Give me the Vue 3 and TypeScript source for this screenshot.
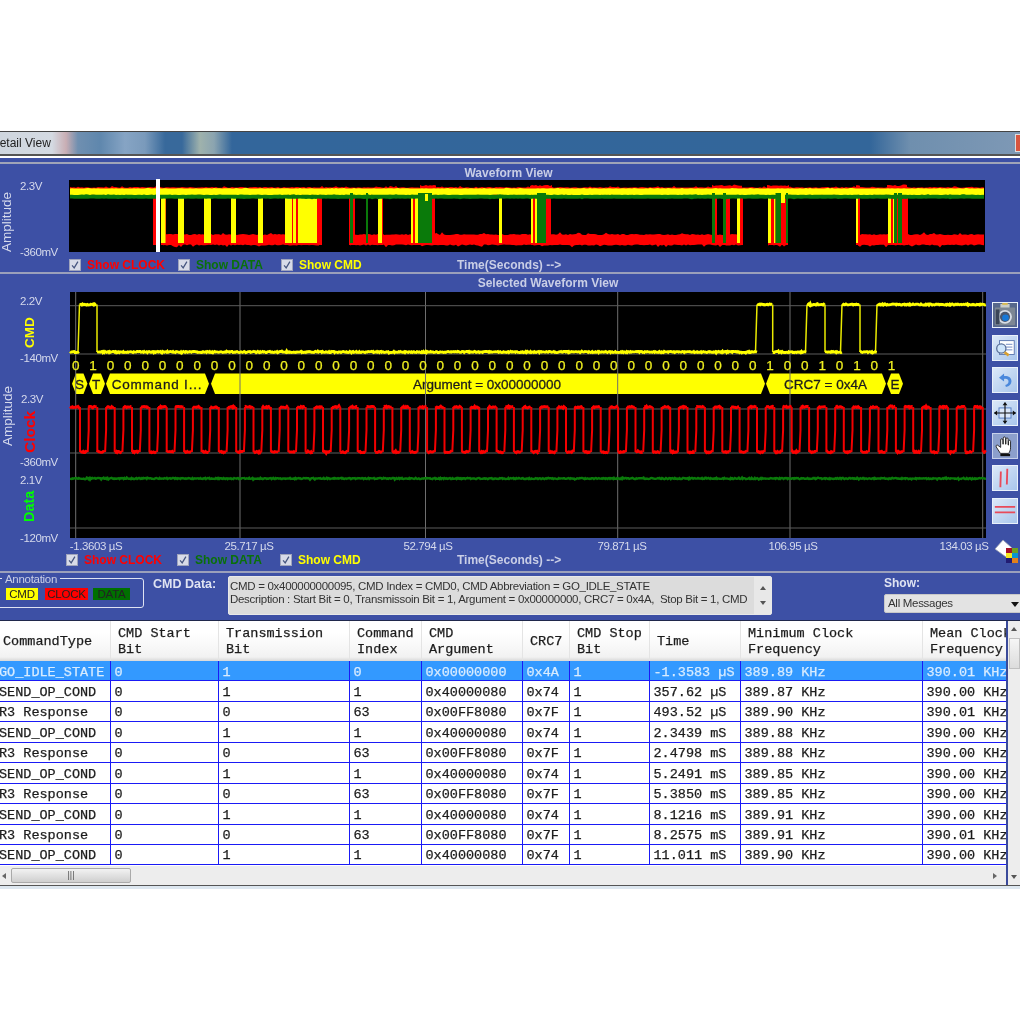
<script setup lang="ts">
function makeRng(seed: number) {
  let s = seed >>> 0
  return () => {
    s = (s + 0x6d2b79f5) >>> 0
    let t = s
    t = Math.imul(t ^ (t >>> 15), t | 1)
    t ^= t + Math.imul(t ^ (t >>> 7), t | 61)
    return ((t ^ (t >>> 14)) >>> 0) / 4294967296
  }
}
const rng = makeRng(42)
const n = (a: number) => (rng() * 2 - 1) * a
const f = (v: number) => v.toFixed(1)

/* ---------- overview plot ---------- */
function band(x0: number, x1: number, top: number, bottom: number, a: number, spike = 0): string {
  const up: string[] = []
  const down: string[] = []
  for (let x = x0; x <= x1; x += 2) {
    const spikeT = rng() < 0.07 ? spike : 0
    const spikeB = rng() < 0.07 ? spike : 0
    up.push(`${f(x)},${f(top + n(a) - spikeT)}`)
    down.unshift(`${f(x)},${f(bottom + n(a) + spikeB)}`)
  }
  return 'M' + up.concat(down).join('L') + 'Z'
}
const ovBottom = [
  [163, 320],
  [350, 743],
  [768, 788],
  [858, 985]
]
  .map(([a, b]) => band(a, b, 234.5, 245, 0.6, 1.8))
  .join('')
const ovRedTop = band(70, 985, 187.4, 194, 0.4, 1)
const ovRedBurst = [
  [420, 436],
  [530, 552],
  [712, 742],
  [767, 790],
  [856, 860],
  [887, 908]
]
  .map(([a, b]) => band(a, b, 185.5, 194, 0.6, 1.2))
  .join('')
const ovYellow = band(70, 985, 188.4, 195, 0.2, 0.5)
const ovGreen = band(70, 985, 194.8, 198.7, 0.15, 0.4)
const bar = (x0: number, x1: number, y0: number, y1: number) => ({ x: x0, w: x1 - x0, y: y0, h: y1 - y0 })
const ovRedBars = [
  [153, 156], [161, 166], [285, 322], [349, 355], [378, 383], [411, 420], [425, 435], [531, 551],
  [712, 717], [723, 730], [737, 743], [768, 788], [856, 860], [888, 908]
].map(([a, b]) => bar(a, b, 198, 245))
const ovYellowBars = [
  [161, 165.5], [178, 184], [204, 211], [231, 236], [258, 263], [285, 292], [293, 296], [298, 317],
  [378, 382], [411, 413], [415, 418], [499, 502], [531, 533], [535, 537], [737, 740], [768, 771],
  [774, 775.5], [856, 858], [888, 891], [893, 894.5]
].map(([a, b]) => bar(a, b, 198, 243))
const ovGreenBars = [
  [350, 353], [366, 368], [418, 432], [537, 546], [712, 715], [723, 726], [775.5, 781], [786, 788],
  [894, 897], [898, 902]
].map(([a, b]) => bar(a, b, 193, 243))

/* ---------- selected waveform plot ---------- */
function plateau(x0: number, x1: number, y: number, a: number): string {
  const pts: string[] = []
  for (let x = x0; x <= x1; x += 0.8) {
    pts.push(`${f(x)},${f(y + n(rng() < 0.06 ? a * 1.8 : a))}`)
  }
  return 'M' + pts.join('L')
}
const cmdHigh = [
  [79.5, 97],
  [757, 772.7],
  [807, 825],
  [842, 860],
  [877, 986]
]
const HI = 304.5
const LO = 352
let cmdFlat = ''
let cmdEdge = ''
{
  let cur = 70
  for (const [a, b] of cmdHigh) {
    cmdFlat += plateau(cur, a, LO, 0.6) + plateau(a, b, HI, 0.6)
    cmdEdge += `M${a - 1.5},${LO}L${a},${HI}`
    if (b < 986) cmdEdge += `M${b},${HI}L${b},${LO}`
    cur = b
  }
}
let clockFlat = ''
let clockEdge = ''
{
  const period = 17.36
  clockFlat += plateau(70, 80, 407, 0.7)
  clockEdge += 'M80,407L80,452'
  clockFlat += plateau(80, 87.7, 452, 0.7)
  for (let x = 87.7; x < 986; x += period) {
    const fall = Math.min(x + 9.6, 986)
    const rise = Math.min(x + period, 986)
    clockEdge += `M${f(x)},452L${f(x + 1)},430L${f(x + 1)},407`
    clockFlat += plateau(x + 1, fall, 407, 0.7)
    if (fall < 986) {
      clockEdge += `M${f(fall)},407L${f(fall)},452`
      clockFlat += plateau(fall, rise, 452, 0.7)
    }
  }
}
const dataPath = plateau(70, 986, 478.5, 0.6)

const bitString = '01' + '0'.repeat(38) + '10010101'
const bits = bitString.split('').map((b, i) => ({ b, x: 75.7 + i * 17.36 }))
const vGrid = [75.7, 240, 425.5, 617.7, 790, 982.7]
const hGrid = [305.7, 354, 409, 453, 528]

function hex(x0: number, x1: number): string {
  const t = 373.5
  const b = 394
  const m = (t + b) / 2
  return `${x0},${m} ${x0 + 4},${t} ${x1 - 4},${t} ${x1},${m} ${x1 - 4},${b} ${x0 + 4},${b}`
}
const annotations = [
  { pts: hex(72, 87.5), label: 'S', x: 79.5, wide: false },
  { pts: hex(89, 105), label: 'T', x: 96, wide: false },
  { pts: hex(106, 209), label: 'Command I...', x: 157, wide: true },
  { pts: hex(211, 765), label: 'Argument = 0x00000000', x: 487, wide: false },
  { pts: hex(766, 886), label: 'CRC7 = 0x4A', x: 825.5, wide: false },
  { pts: hex(887, 903), label: 'E', x: 895, wide: false }
]
const axisLabels = [
  { t: '-1.3603 µS', x: 96 },
  { t: '25.717 µS', x: 249 },
  { t: '52.794 µS', x: 428 },
  { t: '79.871 µS', x: 622 },
  { t: '106.95 µS', x: 793 },
  { t: '134.03 µS', x: 964 }
]
const sideValues = [
  { t: '2.2V', x: 20, y: 305 },
  { t: '-140mV', x: 20, y: 362 },
  { t: '2.3V', x: 21, y: 403 },
  { t: '-360mV', x: 20, y: 466 },
  { t: '2.1V', x: 20, y: 484 },
  { t: '-120mV', x: 20, y: 542 }
]
const checks = [
  { label: 'Show CLOCK', cls: 'c-red' },
  { label: 'Show DATA', cls: 'c-green' },
  { label: 'Show CMD', cls: 'c-yellow' }
]

/* ---------- table ---------- */
const headers = [
  'CommandType',
  'CMD Start\nBit',
  'Transmission\nBit',
  'Command\nIndex',
  'CMD\nArgument',
  'CRC7',
  'CMD Stop\nBit',
  'Time',
  'Minimum Clock\nFrequency',
  'Mean Clock\nFrequency'
]
const send = ['SEND_OP_COND', '0', '1', '1', '0x40000080', '0x74', '1']
const r3 = ['R3 Response', '0', '0', '63', '0x00FF8080', '0x7F', '1']
const rows: string[][] = [
  ['GO_IDLE_STATE', '0', '1', '0', '0x00000000', '0x4A', '1', '-1.3583 µS', '389.89 KHz', '390.01 KHz'],
  [...send, '357.62 µS', '389.87 KHz', '390.00 KHz'],
  [...r3, '493.52 µS', '389.90 KHz', '390.01 KHz'],
  [...send, '2.3439 mS', '389.88 KHz', '390.00 KHz'],
  [...r3, '2.4798 mS', '389.88 KHz', '390.00 KHz'],
  [...send, '5.2491 mS', '389.85 KHz', '390.00 KHz'],
  [...r3, '5.3850 mS', '389.85 KHz', '390.00 KHz'],
  [...send, '8.1216 mS', '389.91 KHz', '390.00 KHz'],
  [...r3, '8.2575 mS', '389.91 KHz', '390.01 KHz'],
  [...send, '11.011 mS', '389.90 KHz', '390.00 KHz']
]
const desc1 = 'CMD = 0x400000000095, CMD Index = CMD0, CMD Abbreviation = GO_IDLE_STATE'
const desc2 = 'Description : Start Bit = 0, Transmissoin Bit = 1, Argument = 0x00000000, CRC7 = 0x4A,  Stop Bit = 1, CMD'
</script>

<template>
  <div class="root">
    <div class="titlebar">
      <span class="title-text">Detail View</span>
      <span class="close"></span>
    </div>
    <div class="panel">
      <div class="title first">Waveform View</div>
      <svg class="overview" viewBox="0 180 1020 78" width="1020" height="78">
        <text class="axis big" transform="translate(11 252) rotate(-90)">Amplitude</text>
        <text class="axis" x="20" y="190">2.3V</text>
        <text class="axis" x="20" y="256">-360mV</text>
        <rect x="69" y="180" width="916" height="72" fill="#000" />
        <path :d="ovBottom" fill="#f00" />
        <path :d="ovRedTop" fill="#f00" />
        <path :d="ovRedBurst" fill="#f00" />
        <rect v-for="(b, i) in ovRedBars" :key="'r' + i" :x="b.x" :y="b.y" :width="b.w" :height="b.h" fill="#f00" />
        <rect v-for="(b, i) in ovYellowBars" :key="'y' + i" :x="b.x" :y="b.y" :width="b.w" :height="b.h" fill="#ff0" />
        <path :d="ovYellow" fill="#ff0" />
        <path :d="ovGreen" fill="#0a7a0a" />
        <rect v-for="(b, i) in ovGreenBars" :key="'g' + i" :x="b.x" :y="b.y" :width="b.w" :height="b.h" fill="#0a7a0a" />
        <rect x="425" y="194" width="3" height="7" fill="#ff0" />
        <rect x="781" y="194" width="4" height="9" fill="#ff0" />
        <rect x="156" y="179" width="4" height="73" fill="#fff" />
      </svg>
      <div class="checkrow">
        <label v-for="c in checks" :key="c.label" class="check" :class="c.cls">
          <span class="box"><svg viewBox="0 0 12 12" width="10" height="10"><path d="M2.5 6.5 5 9.5 9.5 2" fill="none" stroke="#46557f" stroke-width="1.5" /></svg></span>
          {{ c.label }}
        </label>
        <span class="time-label">Time(Seconds) --&gt;</span>
      </div>
      <div class="divider"></div>
      <div class="title second">Selected Waveform View</div>
      <div class="plot-row">
        <svg class="detail" viewBox="0 292 986 260" width="986" height="260">
          <text class="axis big" transform="translate(12 446) rotate(-90)">Amplitude</text>
          <text v-for="v in sideValues" :key="v.t + v.y" class="axis" :x="v.x" :y="v.y">{{ v.t }}</text>
          <text class="side s-cmd" fill="#ff0" transform="translate(34 348) rotate(-90)">CMD</text>
          <text class="side s-clock" fill="#f00" transform="translate(35 453) rotate(-90)">Clock</text>
          <text class="side s-data" fill="#0f0" transform="translate(34 522) rotate(-90)">Data</text>
          <rect x="70" y="292" width="916" height="246" fill="#000" />
          <g v-for="a in annotations" :key="a.label">
            <polygon :points="a.pts" fill="#ff0" />
            <text class="anno" :class="{ wide: a.wide }" :x="a.x" y="389" text-anchor="middle">{{ a.label }}</text>
          </g>
          <line v-for="x in vGrid" :key="'v' + x" :x1="x" :x2="x" y1="292" y2="538" stroke="#6e6e6e" stroke-width="1" />
          <line v-for="y in hGrid" :key="'h' + y" x1="70" x2="986" :y1="y" :y2="y" stroke="#5c5c5c" stroke-width="1" />
          <path :d="cmdEdge" fill="none" stroke="#eaea00" stroke-width="1.5" />
          <path :d="cmdFlat" fill="none" stroke="#ff0" stroke-width="2.8" />
          <path :d="clockEdge" fill="none" stroke="#f20000" stroke-width="2" />
          <path :d="clockFlat" fill="none" stroke="#f00" stroke-width="2.8" />
          <path :d="dataPath" fill="none" stroke="#0a7a0a" stroke-width="2.4" />
          <text v-for="(b, i) in bits" :key="'b' + i" class="bit" :x="b.x" y="370" text-anchor="middle">{{ b.b }}</text>
          <text v-for="l in axisLabels" :key="l.t" class="axis" :x="l.x" y="550" text-anchor="middle">{{ l.t }}</text>
        </svg>
        <div class="toolbar">
          <button class="tool dark" type="button" aria-label="Snapshot">
            <svg viewBox="0 0 26 26" width="24" height="24">
              <rect width="26" height="26" fill="#57688c" />
              <rect x="8" y="1" width="10" height="5" fill="#c9cdc8" />
              <rect x="10" y="0" width="6" height="2" fill="#d8b850" />
              <rect x="2" y="5" width="22" height="19" rx="1" fill="#7d8794" />
              <circle cx="13" cy="15" r="7.5" fill="#d7dde6" />
              <circle cx="13" cy="15" r="5.5" fill="#4a5870" />
              <circle cx="13.5" cy="16" r="3.6" fill="#1678d8" />
              <rect x="3" y="7" width="4" height="16" fill="#3a4558" />
            </svg>
          </button>
          <button class="tool" type="button" aria-label="Find">
            <svg viewBox="0 0 26 26" width="24" height="24">
              <rect x="7" y="5" width="16" height="15" fill="#fff" stroke="#5b77b0" />
              <path d="M14 9h7M14 12h7M14 15h7" stroke="#6a86c0" />
              <circle cx="9" cy="13.500" r="5" fill="#cfe6fb" stroke="#5a6f98" stroke-width="1.4" />
              <path d="M12.500 17.500l4.500 3.500" stroke="#d8a030" stroke-width="2.800" />
            </svg>
          </button>
          <button class="tool" type="button" aria-label="Undo">
            <svg viewBox="0 0 26 26" width="24" height="24">
              <path d="M12 6 6.500 10.500l5.500 4v-2.700c3-.5 4.800.5 4.800 2.700 0 1.900-1.300 3.200-3.500 3.800l.7 2.200c3.800-.6 6-3 6-6.200 0-3.800-3.200-5.900-8-5.600z" fill="#4a88dc" />
            </svg>
          </button>
          <button class="tool" type="button" aria-label="Pan">
            <svg viewBox="0 0 26 26" width="24" height="24">
              <rect x="6.500" y="7.500" width="13" height="11" fill="#dbe8fa" stroke="#4f78c0" />
              <path d="M13 2v22M1.500 13h23" stroke="#111" stroke-width="1.200" />
              <path d="M13 1l-2.600 3.500h5.200zM13 25l-2.600-3.500h5.200zM1 13l3.500-2.600v5.200zM25 13l-3.500-2.600v5.200z" fill="#111" />
            </svg>
          </button>
          <button class="tool pressed" type="button" aria-label="Hand">
            <svg viewBox="0 0 26 26" width="24" height="24">
              <path d="M8 21 3.500 14c-.8-1.800 1-2.600 2-1.500l2.800 2V6.500c0-1.800 2.300-1.800 2.400 0V11h.4V4.500c0-1.800 2.400-1.800 2.500 0V11h.4V5.500c0-1.700 2.400-1.700 2.400 0V12h.4V8c0-1.600 2.200-1.600 2.200 0v7c0 2.500-1 4.500-2 6z" fill="#fff" stroke="#222" stroke-width="1" />
              <rect x="8" y="21.500" width="10.500" height="2.500" fill="#111" />
            </svg>
          </button>
          <button class="tool" type="button" aria-label="Vertical cursors">
            <svg viewBox="0 0 26 26" width="24" height="24"><path d="M8.500 6 8 23M15.500 3 15 20" stroke="#e84a5a" stroke-width="2" /></svg>
          </button>
          <button class="tool" type="button" aria-label="Horizontal cursors">
            <svg viewBox="0 0 26 26" width="24" height="24"><path d="M2 8.500h22M2 14.500h22" stroke="#e84a5a" stroke-width="2" /></svg>
          </button>
          <svg class="paint" viewBox="0 0 26 26" width="26" height="26">
            <path d="M1 11 9 2l9 8-6 9z" fill="#fff" stroke="#9aa0b0" stroke-width=".8" />
            <rect x="12" y="10" width="6" height="5" fill="#a81028" />
            <rect x="18" y="10" width="6" height="5" fill="#6ea024" />
            <rect x="12" y="15" width="6" height="5" fill="#f4e820" />
            <rect x="18" y="15" width="6" height="5" fill="#0a94d4" />
            <rect x="12" y="20" width="6" height="5" fill="#221c72" />
            <rect x="18" y="20" width="6" height="5" fill="#e2801a" />
          </svg>
        </div>
      </div>
      <div class="checkrow low">
        <label v-for="c in checks" :key="c.label" class="check" :class="c.cls">
          <span class="box"><svg viewBox="0 0 12 12" width="10" height="10"><path d="M2.5 6.5 5 9.5 9.5 2" fill="none" stroke="#46557f" stroke-width="1.5" /></svg></span>
          {{ c.label }}
        </label>
        <span class="time-label">Time(Seconds) --&gt;</span>
      </div>
      <div class="divider low-div"></div>
      <div class="lower">
        <div class="annotation">
          <span class="legend">Annotation</span>
          <span class="chip chip-y">CMD</span>
          <span class="chip chip-r">CLOCK</span>
          <span class="chip chip-g">DATA</span>
        </div>
        <div class="cmd-label">CMD Data:</div>
        <div class="cmd-box">
          <div class="cmd-text">
            <div>{{ desc1 }}</div>
            <div>{{ desc2 }}</div>
          </div>
          <div class="cmd-scroll">
            <span class="tri up"></span>
            <span class="tri down"></span>
          </div>
        </div>
        <div class="show">
          <div class="show-label">Show:</div>
          <div class="select">All Messages<span class="tri down black"></span></div>
        </div>
      </div>
    </div>
    <div class="gridwrap">
      <div class="grid-main">
        <div class="grid-clip">
          <div class="grid">
            <div class="row head">
              <div v-for="h in headers" :key="h" class="hcell">{{ h }}</div>
            </div>
            <div v-for="(r, i) in rows" :key="i" class="row body" :class="{ selected: i === 0 }">
              <div v-for="(v, j) in r" :key="j" class="cell">{{ v }}</div>
            </div>
          </div>
        </div>
        <div class="hscroll">
          <span class="tri left"></span>
          <span class="thumb">|||</span>
          <span class="tri right"></span>
        </div>
      </div>
      <div class="vscroll">
        <span class="tri up"></span>
        <span class="vthumb"></span>
        <span class="tri down"></span>
      </div>
    </div>
    <div class="footer"></div>
  </div>
</template>

<style scoped>
.root {
  width: 1020px;
  height: 1020px;
  padding-top: 131px;
  box-sizing: border-box;
  background: #fff;
  overflow: hidden;
  font-family: "Liberation Sans", Arial, sans-serif;
  filter: blur(0.45px);
}
.titlebar {
  height: 25px;
  box-sizing: border-box;
  border-top: 1px solid #444;
  border-bottom: 2px solid #555;
  display: flex;
  align-items: center;
  justify-content: space-between;
  overflow: hidden;
  background: linear-gradient(to right, #cfd6de 0, #d4dae2 52px, #c9aeb4 66px, #6f8fb0 78px, #5f87ad 100px, #86a4c4 125px, #7a9abb 145px, #38699b 165px, #38699b 182px, #9fb2ac 200px, #8ba4b0 214px, #33669b 232px, #33669a 850px, #33669a 870px, #6f8fae 910px, #7d98b5 1014px);
}
.title-text {
  margin-left: -9px;
  font-size: 12px;
  color: #222;
}
.close {
  width: 4px;
  height: 16px;
  border: 1px solid #ddd;
  border-right: 0;
  background: #d8553f;
}
.panel {
  height: 463px;
  box-sizing: border-box;
  margin-top: 1px;
  background: #3d50a5;
  border-top: 1px solid #fff;
}
.title {
  font-size: 12px;
  font-weight: 700;
  color: #c9cee6;
  text-align: center;
}
.title.first {
  height: 14px;
  padding-top: 8px;
  line-height: 14px;
  background: linear-gradient(#3d50a5 0 4px, #a0a4b8 4px 5.500px, #3d50a5 5.500px);
  padding-right: 3px;
}
.title.second {
  height: 18.500px;
  line-height: 19px;
  padding-left: 76px;
}
svg {
  display: block;
}
.overview,
.detail {
  overflow: visible;
}
.axis {
  font-size: 11.500px;
  letter-spacing: -0.4px;
  fill: #d6daec;
}
.axis.big {
  font-size: 13.500px;
  letter-spacing: 0;
}
.side {
  font-weight: 700;
}
.s-cmd { font-size: 13.500px; }
.s-clock { font-size: 15.500px; }
.s-data { font-size: 14.500px; }
.anno {
  font-size: 13.500px;
  font-weight: 400;
  fill: #1c1c1c;
  stroke: #1c1c1c;
  stroke-width: 0.3px;
}
.anno.wide {
  letter-spacing: 0.8px;
}
.bit {
  font-size: 13.500px;
  font-weight: 400;
  fill: #f0f020;
  stroke: #f0f020;
  stroke-width: 0.25px;
}
.checkrow {
  height: 13px;
  display: grid;
  grid-template-columns: 109px 103px 176px auto;
  padding-left: 69px;
  align-items: center;
}
.checkrow.low {
  height: 16px;
  grid-template-columns: 111px 103px 177px auto;
  padding-left: 66px;
}
.check {
  display: flex;
  align-items: center;
  gap: 6px;
  font-size: 12px;
  font-weight: 700;
}
.box {
  width: 12px;
  height: 12px;
  box-sizing: border-box;
  border: 1px solid #9fa4bc;
  background: #d8dbe8;
  display: flex;
  align-items: center;
  justify-content: center;
}
.c-red { color: #f00; }
.c-green { color: #0a700a; }
.c-yellow { color: #ff0; }
.time-label {
  font-size: 12px;
  font-weight: 700;
  color: #c9cee6;
}
.divider {
  height: 1.500px;
  background: #9ba0bb;
  margin-top: 1px;
}
.low-div {
  margin-top: 3px;
}
.plot-row {
  display: flex;
  height: 260px;
}
.detail {
  flex: none;
}
.toolbar {
  display: flex;
  flex-direction: column;
  gap: 6.700px;
  padding: 10px 0 0 6px;
}
.tool {
  width: 26px;
  height: 26px;
  flex: none;
  padding: 0;
  box-sizing: border-box;
  border: 1.500px solid #eaf1fb;
  background: linear-gradient(135deg, #dbe8f8, #a9c6ec);
  display: flex;
  align-items: center;
  justify-content: center;
  overflow: hidden;
}
.tool.dark {
  background: #57688c;
}
.tool.pressed {
  background: #8c9fcc;
  border-color: #c6d0ea;
}
.paint {
  flex: none;
  margin-top: 7px;
  margin-left: 2px;
}
.lower {
  display: flex;
  align-items: flex-start;
  height: 47px;
}
.annotation {
  position: relative;
  flex: none;
  width: 147px;
  height: 30px;
  box-sizing: border-box;
  margin: 5.500px 0 0 -3px;
  border: 1px solid #dfe3f2;
  border-radius: 3px;
  display: flex;
  padding: 9px 0 0 8px;
}
.legend {
  position: absolute;
  left: 4px;
  top: -6px;
  padding: 0 3px;
  background: #3d50a5;
  font-size: 11.500px;
  letter-spacing: -0.3px;
  line-height: 13px;
  color: #c9cee6;
}
.chip {
  height: 12px;
  line-height: 12px;
  font-size: 11.500px;
  letter-spacing: -0.2px;
  text-align: center;
  color: #222;
}
.chip-y { width: 32px; background: #ff0; }
.chip-r { width: 43px; margin-left: 7px; background: #f00; }
.chip-g { width: 37px; margin-left: 5px; background: #007000; }
.cmd-label {
  flex: none;
  width: 66px;
  margin: 4px 0 0 9px;
  font-size: 12.500px;
  font-weight: 700;
  line-height: 14px;
  color: #dfe3f2;
}
.cmd-box {
  flex: none;
  width: 544px;
  height: 39px;
  box-sizing: border-box;
  margin: 3px 0 0 9px;
  background: #dcdcdc;
  border: 1px solid #e8e8e8;
  border-radius: 2px;
  display: flex;
}
.cmd-text {
  flex: 1;
  padding: 3px 0 0 1px;
  font-size: 11.500px;
  letter-spacing: -0.3px;
  line-height: 13px;
  color: #333;
  white-space: pre;
  overflow: hidden;
}
.cmd-scroll {
  width: 17px;
  background: #e8e8e8;
  display: flex;
  flex-direction: column;
  align-items: center;
  justify-content: space-between;
  padding: 9px 0 9px;
  box-sizing: border-box;
}
.tri {
  display: block;
  width: 0;
  height: 0;
  border-style: solid;
  border-color: transparent;
}
.tri.up { border-width: 0 3.500px 4px; border-bottom-color: #555; }
.tri.down { border-width: 4px 3.500px 0; border-top-color: #555; }
.tri.left { border-width: 3.500px 4px 3.500px 0; border-right-color: #666; }
.tri.right { border-width: 3.500px 0 3.500px 4px; border-left-color: #666; }
.show {
  flex: none;
  width: 150px;
  margin: 3px 0 0 112px;
}
.show-label {
  font-size: 12px;
  font-weight: 700;
  line-height: 15px;
  color: #dfe3f2;
}
.select {
  position: relative;
  width: 150px;
  height: 19px;
  box-sizing: border-box;
  margin-top: 3px;
  padding-left: 3px;
  background: #e3e3e3;
  border: 1px solid #c8c8c8;
  border-radius: 2px;
  font-size: 11.500px;
  letter-spacing: -0.3px;
  line-height: 17px;
  color: #333;
}
.tri.black {
  position: absolute;
  left: 126px;
  top: 7px;
  border-width: 5px 4.500px 0;
  border-top-color: #111;
}
.gridwrap {
  display: flex;
  height: 266px;
  border-top: 1px solid #20284c;
  box-sizing: border-box;
  border-bottom: 1px solid #555;
}
.grid-main {
  width: 1006px;
  flex: none;
}
.grid-clip {
  height: 245px;
  overflow: hidden;
  background: #fff;
}
.grid {
  width: 1010px;
  margin-left: -2px;
  font-family: "Liberation Mono", "Courier New", monospace;
  font-size: 13.500px;
  color: #1c1c1c;
  -webkit-text-stroke: 0.25px currentColor;
}
.row {
  display: grid;
  grid-template-columns: 113px 108px 131px 72px 101px 47px 80px 91px 182px 85px;
}
.row.head {
  height: 40px;
  background: linear-gradient(#fff 0, #fff 30%, #f2f2f2 90%, #d8d8d8 100%);
}
.hcell {
  display: flex;
  align-items: center;
  box-sizing: border-box;
  padding: 1px 0 0 7px;
  line-height: 16px;
  white-space: pre;
  overflow: hidden;
  border-right: 1px solid #e4e4e4;
}
.hcell:first-child {
  padding-left: 5px;
}
.row.body {
  height: 20.440px;
  box-sizing: border-box;
  border-bottom: 1px solid #1a1af5;
}
.cell {
  box-sizing: border-box;
  padding: 2.500px 0 0 3.500px;
  line-height: 18px;
  white-space: pre;
  overflow: hidden;
  border-right: 1px solid #1a1af5;
}
.cell:first-child {
  padding-left: 1px;
}
.row.selected {
  background: #3399ff;
  color: #d8ecff;
}
.hscroll {
  height: 19px;
  background: #ededed;
  display: flex;
  align-items: center;
  padding: 0 9px 0 2px;
  gap: 5px;
}
.hscroll .tri.right {
  margin-left: auto;
}
.thumb {
  width: 120px;
  height: 15px;
  box-sizing: border-box;
  border: 1px solid #aaa;
  border-radius: 2px;
  background: linear-gradient(#f2f2f2, #cfcfcf);
  font-family: "Liberation Sans", sans-serif;
  font-size: 9px;
  line-height: 13px;
  text-align: center;
  color: #555;
}
.vscroll {
  flex: 1;
  border-left: 2px solid #3a4a9a;
  background: #ededed;
  display: flex;
  flex-direction: column;
  align-items: center;
  padding: 6px 0 6px;
  box-sizing: border-box;
}
.vthumb {
  width: 11px;
  height: 31px;
  margin-top: 7px;
  box-sizing: border-box;
  border: 1px solid #c0c0c0;
  background: linear-gradient(#f6f6f6, #dcdcdc);
}
.vscroll .tri.down {
  margin-top: auto;
}
.footer {
  height: 3px;
  background: #dde7f0;
}
</style>
